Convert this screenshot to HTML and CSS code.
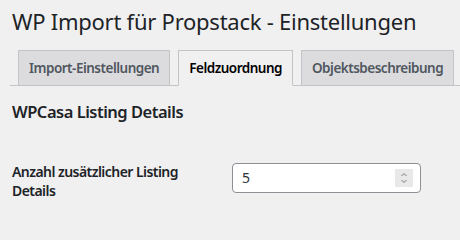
FILE: index.html
```html
<!DOCTYPE html>
<html lang="de">
<head>
<meta charset="utf-8">
<title>WP Import für Propstack - Einstellungen</title>
<link rel="stylesheet" href="styles.css">
</head>
<body>
<div class="wrap">
  <h1 class="page-title">WP Import für Propstack - Einstellungen</h1>
  <nav class="nav-tab-wrapper">
    <a class="nav-tab" href="#">Import-Einstellungen</a>
    <a class="nav-tab nav-tab-active" href="#">Feldzuordnung</a>
    <a class="nav-tab" href="#">Objektsbeschreibung</a>
  </nav>
  <h2 class="section-title">WPCasa Listing Details</h2>
  <div class="form-row">
    <label class="form-label" for="count">Anzahl zusätzlicher Listing Details</label>
    <div class="form-field">
      <div class="number-input">
        <input id="count" class="number-value" type="text" value="5">
        <span class="spinner" aria-hidden="true">
          <svg width="18" height="18" viewBox="0 0 18 18">
            <path d="M6.5 7 L9 4.5 L11.5 7" fill="none" stroke="#7a7a7a" stroke-width="1"/>
            <path d="M6.5 11 L9 13.5 L11.5 11" fill="none" stroke="#7a7a7a" stroke-width="1"/>
          </svg>
        </span>
      </div>
    </div>
  </div>
</div>
</body>
</html>
```
FILE: styles.css
```css
html, body {
  margin: 0;
  padding: 0;
  background: #f0f0f1;
}
body {
  font-family: "Noto Sans", "Open Sans", "Liberation Sans", sans-serif;
  color: #1d2327;
  font-size: 14px;
}
.wrap {
  padding: 0 0 0 10px;
}
.page-title {
  margin: 6px 0 0 2px;
  font-size: 22px;
  font-weight: 400;
  line-height: 30px;
  color: #1d2327;
  letter-spacing: -0.25px;
}
.nav-tab-wrapper {
  display: flex;
  margin-top: 14px;
  border-bottom: 1px solid #c3c4c7;
}
.nav-tab {
  display: block;
  margin: 0 0 -1px 8px;
  padding: 5px 10px;
  font-size: 13.5px;
  line-height: 24px;
  font-weight: 600;
  color: #50575e;
  background: #dcdcde;
  border: 1px solid #c3c4c7;
  text-decoration: none;
  letter-spacing: -0.5px;
  white-space: nowrap;
}
.nav-tab-active {
  background: #f0f0f1;
  color: #000;
  border-bottom-color: #f0f0f1;
}
.section-title {
  margin: 14px 0 18px 2px;
  font-size: 16.5px;
  font-weight: 600;
  line-height: 24px;
  color: #1d2327;
  letter-spacing: -0.5px;
}
.form-row {
  display: flex;
  margin-left: 2px;
}
.form-label {
  width: 200px;
  padding: 20px 10px 20px 0;
  font-weight: 600;
  line-height: 19px;
  color: #1d2327;
  letter-spacing: -0.55px;
}
.form-field {
  padding: 21px 10px 0;
}
.number-input {
  display: flex;
  align-items: center;
  width: 171px;
  height: 28px;
  padding: 0 7px 0 9px;
  box-sizing: content-box;
  background: #fff;
  border: 1px solid #8c8f94;
  border-radius: 4px;
}
.number-value {
  flex: 1;
  min-width: 0;
  border: 0;
  outline: 0;
  padding: 0;
  margin: 0;
  background: transparent;
  font-family: inherit;
  font-size: 14px;
  line-height: 28px;
  color: #2c3338;
}
.spinner {
  display: flex;
  width: 18px;
  height: 18px;
  background: #e9e9ea;
}
```
